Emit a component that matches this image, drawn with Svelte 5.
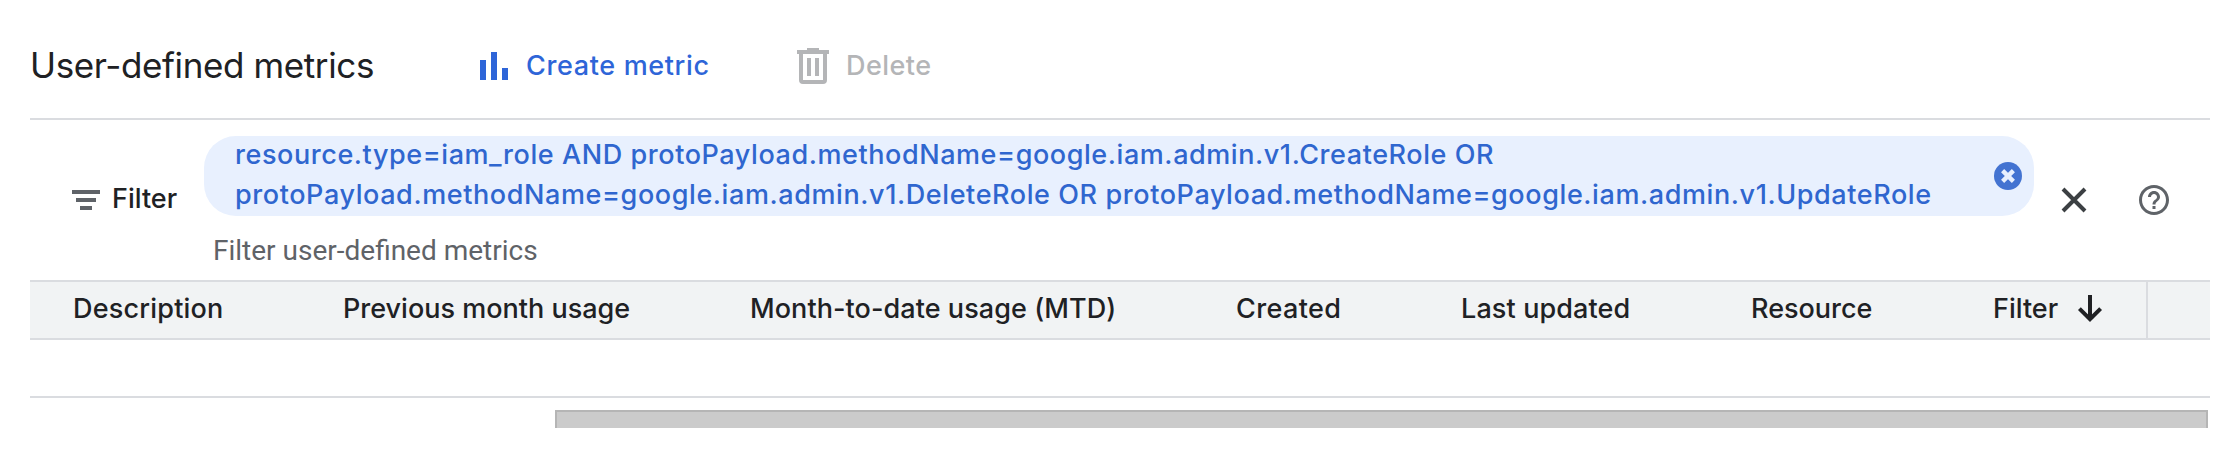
<script>
  const columns = [
    { label: 'Description', spacing: 0.2 },
    { label: 'Previous month usage', spacing: 0 },
    { label: 'Month-to-date usage (MTD)', spacing: 0.07 },
    { label: 'Created', spacing: 0.4 },
    { label: 'Last updated', spacing: 0.12 },
    { label: 'Resource', spacing: 0 },
    { label: 'Filter', spacing: 0, sorted: true },
  ];
</script>

<main>
  <header>
    <h1>User-defined metrics</h1>
    <button class="create">
      <svg width="28" height="28" viewBox="0 0 28 28" fill="currentColor"><path d="M0 8h6v20H0zM11 0h6v28h-6zM22 16h6v12h-6z" /></svg>
      <span>Create metric</span>
    </button>
    <button class="delete" disabled>
      <svg width="32" height="36" viewBox="0 0 32 36" fill="currentColor">
        <path fill-rule="evenodd" d="M10 0h12v2h10v4h-2v26a4 4 0 0 1-4 4H6a4 4 0 0 1-4-4V6H0V2h10zM6 6v26h20V6z" />
        <path d="M10 10h4v18h-4zM18 10h4v18h-4z" />
      </svg>
      <span>Delete</span>
    </button>
  </header>

  <section class="filter">
    <div class="filter-label">
      <svg width="28" height="20" viewBox="0 0 28 20" fill="#5f6368"><path d="M0 0h28v4H0zM4 8h20v4H4zM8 16h12v4H8z" /></svg>
      <span>Filter</span>
    </div>
    <div class="field">
      <div class="chip">
        <div class="query">
          <div>resource.type=iam_role AND protoPayload.methodName=google.iam.admin.v1.CreateRole OR</div>
          <div class="wrapped">protoPayload.methodName=google.iam.admin.v1.DeleteRole OR protoPayload.methodName=google.iam.admin.v1.UpdateRole</div>
        </div>
        <svg width="28" height="28" viewBox="0 0 28 28">
          <circle cx="14" cy="14" r="14" fill="#4373d1" />
          <path d="M8.6 8.6l10.8 10.8M19.4 8.6L8.6 19.4" stroke="#e8f0fe" stroke-width="4.4" />
        </svg>
      </div>
      <div class="placeholder">Filter user-defined metrics</div>
    </div>
    <svg class="clear" width="26" height="26" viewBox="0 0 26 26"><path d="M2 2l22 22M24 2L2 24" stroke="#3c4043" stroke-width="4" /></svg>
    <svg class="help" width="36" height="36" viewBox="0 0 24 24" fill="#5f6368"><path d="M11 18h2v-2h-2v2zm1-16C6.48 2 2 6.48 2 12s4.480 10 10 10 10-4.480 10-10S17.520 2 12 2zm0 18c-4.410 0-8-3.590-8-8s3.590-8 8-8 8 3.590 8 8-3.590 8-8 8zm0-14c-2.210 0-4 1.790-4 4h2c0-1.100.9-2 2-2s2 .9 2 2c0 2-3 1.750-3 5h2c0-2.250 3-2.500 3-5 0-2.210-1.790-4-4-4z" /></svg>
  </section>

  <div class="table-head">
    {#each columns as column}
      <div class="cell">
        <span style="letter-spacing: {column.spacing}px">{column.label}</span>
        {#if column.sorted}
          <svg width="26" height="28" viewBox="0 0 26 28" fill="none" stroke="currentColor" stroke-width="4"><path d="M13 0v24M2.400 13.600L13 24.200l10.600-10.600" /></svg>
        {/if}
      </div>
    {/each}
    <div class="end"></div>
  </div>
  <div class="empty-row"></div>
  <div class="scrollbar"><div class="thumb"></div></div>
</main>

<style>
  :global(body) {
    background: #fff;
  }
  main {
    width: 2234px;
    height: 452px;
    box-sizing: border-box;
    padding: 0 24px 0 30px;
    overflow: hidden;
    font: 500 27px/40px Inter, sans-serif;
    color: #202124;
    white-space: nowrap;
  }
  svg {
    display: block;
    flex: none;
  }
  header {
    display: flex;
    align-items: center;
    height: 120px;
    box-sizing: border-box;
    padding-top: 14px;
    border-bottom: 2px solid #dadce0;
  }
  h1 {
    margin: 0;
    width: 450px;
    padding-bottom: 2px;
    font-weight: 400;
    font-size: 35px;
    letter-spacing: -0.38px;
  }
  button {
    display: flex;
    align-items: center;
    border: 0;
    padding: 0;
    background: none;
    font: inherit;
  }
  .filter-label span {
    padding-bottom: 2px;
  }
  .create {
    width: 317px;
    gap: 18px;
    color: #2e65d8;
    letter-spacing: 0.64px;
  }
  .delete {
    gap: 17px;
    color: #b4b5b7;
    letter-spacing: 0.45px;
  }
  .filter {
    display: flex;
    height: 160px;
    box-sizing: border-box;
    padding-top: 16px;
  }
  .filter-label {
    display: flex;
    align-items: center;
    gap: 12px;
    height: 128px;
    width: 132px;
    padding-left: 42px;
  }
  .field {
    width: 1830px;
  }
  .chip {
    display: flex;
    align-items: center;
    justify-content: space-between;
    height: 80px;
    box-sizing: border-box;
    padding: 0 12px 0 31px;
    border-radius: 32px;
    background: #e8f0fe;
    color: #2f66cf;
    letter-spacing: 0.57px;
  }
  .query {
    padding-bottom: 2px;
  }
  .wrapped {
    letter-spacing: 0.59px;
  }
  .placeholder {
    padding: 15px 0 0 9px;
    font: 400 28px/40px Roboto, sans-serif;
    color: #5f6368;
  }
  .clear {
    margin: 51px 0 0 27px;
  }
  .help {
    margin: 46px 0 0 49px;
  }
  .table-head {
    display: grid;
    grid-template-columns: 270px 407px 486px 225px 290px 242px 153px 1fr;
    height: 60px;
    box-sizing: border-box;
    padding-left: 43px;
    border-top: 2px solid #dadce0;
    border-bottom: 2px solid #dadce0;
    background: #f1f3f4;
  }
  .cell {
    display: flex;
    align-items: center;
    gap: 19px;
    padding-bottom: 2px;
  }
  .end {
    border-left: 2px solid #dadce0;
  }
  .empty-row {
    height: 56px;
    border-bottom: 2px solid #dadce0;
  }
  .scrollbar {
    padding: 12px 2px 0 525px;
  }
  .thumb {
    height: 16px;
    border: 2px solid #b5b5b5;
    border-bottom: 0;
    background: #cbcbcb;
  }
</style>
